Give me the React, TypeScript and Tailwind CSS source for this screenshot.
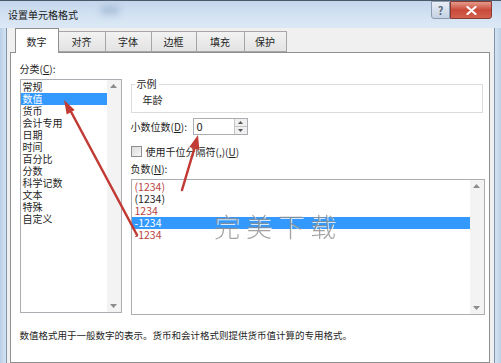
import React from "react";

const categories = [
  "常规",
  "数值",
  "货币",
  "会计专用",
  "日期",
  "时间",
  "百分比",
  "分数",
  "科学记数",
  "文本",
  "特殊",
  "自定义",
];

const negatives = [
  { text: "(1234)", red: true },
  { text: "(1234)", red: false },
  { text: "1234", red: true },
  { text: "-1234", red: false, selected: true },
  { text: "-1234", red: true },
];

const tabs = [
  { label: "数字", w: "w-[44px]" },
  { label: "对齐", w: "w-[47px]" },
  { label: "字体", w: "w-[46px]" },
  { label: "边框", w: "w-[45px]" },
  { label: "填充", w: "w-[48px]" },
  { label: "保护", w: "w-[42px]" },
];

function ScrollTrack() {
  return (
    <div className="flex w-[14px] flex-col items-center justify-between bg-[#f3f3f3] py-[4px] text-[#8c8c8c]">
      <svg width="7" height="4" viewBox="0 0 7 4">
        <path d="M0 4 L3.5 0 L7 4 Z" fill="currentColor" />
      </svg>
      <svg width="7" height="4" viewBox="0 0 7 4">
        <path d="M0 0 L3.5 4 L7 0 Z" fill="currentColor" />
      </svg>
    </div>
  );
}

export default function App() {
  return (
    <div
      className="relative flex h-[363px] w-[501px] flex-col overflow-hidden bg-[#f0f0f0] text-[10px] text-[#1e1e1e]"
      style={{ fontFamily: '"Noto Sans CJK SC", "Noto Sans", sans-serif' }}
    >
      {/* title bar */}
      <div className="relative flex h-[28px] shrink-0 items-center border-t border-[#4a5a6a] bg-gradient-to-b from-[#c3d6ec] via-[#d3e2f2] to-[#dce8f5] pl-[8px]">
        <span className="text-[10px] leading-none text-[#1a1a1a]">设置单元格格式</span>
        <div className="absolute left-[100px] top-[4px] h-[10px] w-[20px] rounded-full bg-[#aec4dc] blur-[3px]" />
        <div className="ml-auto mr-[9px] flex self-start">
          <div className="flex h-[18px] w-[19px] items-center justify-center rounded-bl-[3px] border border-[#8a9bb0] bg-gradient-to-b from-[#e8eef6] to-[#c4d2e3] text-[11px] font-bold leading-none text-[#5c6b7d]">
            ?
          </div>
          <div className="flex h-[18px] w-[42px] items-center justify-center rounded-br-[3px] border border-[#8a3a30] bg-gradient-to-b from-[#e39a8c] via-[#c9493a] to-[#d2614f]">
            <svg width="11" height="9" viewBox="0 0 11 9">
              <path d="M1.5 1 L9.5 8 M9.5 1 L1.5 8" stroke="#ffffff" strokeWidth="2.2" strokeLinecap="round" />
            </svg>
          </div>
        </div>
      </div>

      <div className="flex flex-1">
        {/* left frame */}
        <div className="w-[7px] border-r border-[#7f93aa] bg-gradient-to-r from-[#b9cfe6] to-[#d4e3f2]" />

        <div className="flex flex-1 flex-col">
          {/* tabs */}
          <div className="flex h-[24px] items-end pl-[8px]">
            {tabs.map((t, i) =>
              i === 0 ? (
                <div
                  key={t.label}
                  className={`relative z-10 -mb-px flex h-[25px] ${t.w} items-center justify-center border border-b-0 border-[#8e8f8f] bg-white`}
                >
                  {t.label}
                </div>
              ) : (
                <div
                  key={t.label}
                  className={`flex h-[21px] ${t.w} items-center justify-center border border-l-0 border-[#a6a6a6] bg-gradient-to-b from-[#f2f2f2] to-[#e3e3e3]`}
                >
                  {t.label}
                </div>
              )
            )}
          </div>

          {/* tab panel */}
          <div className="ml-[3px] mr-[4px] flex flex-1 flex-col border border-[#8e8f8f] bg-white pl-[9px] pr-[4px] pt-[10px]">
            <div className="flex">
              {/* category column */}
              <div className="flex w-[102px] flex-col">
                <div className="h-[16px] leading-[12px]">
                  分类(<span className="underline">C</span>):
                </div>
                <div className="flex h-[234px] border border-[#abadb3] bg-white">
                  <div className="flex flex-1 flex-col pt-px">
                    {categories.map((c, i) => (
                      <div
                        key={c}
                        className={`h-[12px] pl-[2px] leading-[12px] ${
                          i === 1 ? "bg-[#3399ff] text-white" : ""
                        }`}
                      >
                        {c}
                      </div>
                    ))}
                  </div>
                  <ScrollTrack />
                </div>
              </div>

              {/* right column */}
              <div className="ml-[9px] flex flex-1 flex-col pt-[16px]">
                <fieldset className="relative h-[34px] w-[352px] border border-[#dcdcdc] px-[3px]">
                  <legend className="px-[2px] leading-[10px]">示例</legend>
                  <div className="pl-[8px] pt-[5px] leading-[12px]">年龄</div>
                </fieldset>

                <div className="mt-[5px] flex h-[17px] items-center">
                  <span className="w-[62px]">
                    小数位数(<span className="underline">D</span>):
                  </span>
                  <div className="flex h-[17px] w-[55px] border border-[#abadb3] bg-white">
                    <div className="flex flex-1 items-center pl-[3px] text-[11px]">0</div>
                    <div className="flex w-[13px] flex-col">
                      <div className="flex flex-1 items-center justify-center border-b border-l border-[#c5c5c5] bg-[#f0f0f0]">
                        <svg width="5" height="3" viewBox="0 0 5 3">
                          <path d="M0 3 L2.5 0 L5 3 Z" fill="#555" />
                        </svg>
                      </div>
                      <div className="flex flex-1 items-center justify-center border-l border-[#c5c5c5] bg-[#f0f0f0]">
                        <svg width="5" height="3" viewBox="0 0 5 3">
                          <path d="M0 0 L2.5 3 L5 0 Z" fill="#555" />
                        </svg>
                      </div>
                    </div>
                  </div>
                </div>

                <div className="mt-[10px] flex h-[12px] items-center">
                  <div className="h-[11px] w-[11px] border border-[#8e8f8f] bg-gradient-to-br from-[#dcdcdc] to-[#f6f6f6]" />
                  <span className="ml-[4px]">
                    使用千位分隔符(,)(<span className="underline">U</span>)
                  </span>
                </div>

                <div className="mt-[6px] h-[12px] leading-[12px]">
                  负数(<span className="underline">N</span>):
                </div>

                <div className="mt-[4px] flex h-[136px] w-[354px] border border-[#abadb3] bg-white">
                  <div className="flex flex-1 flex-col pt-px text-[10.5px]">
                    {negatives.map((n, i) => (
                      <div
                        key={i}
                        className={`h-[12px] pl-[3px] leading-[12px] ${
                          n.selected
                            ? "bg-[#3399ff] text-white"
                            : n.red
                            ? "text-[#b94444]"
                            : "text-[#1e1e1e]"
                        }`}
                      >
                        {n.text}
                      </div>
                    ))}
                  </div>
                  <ScrollTrack />
                </div>
              </div>
            </div>

            <div className="mt-[14px] text-[9.5px] leading-[12px]">
              数值格式用于一般数字的表示。货币和会计格式则提供货币值计算的专用格式。
            </div>
          </div>
        </div>

        {/* right frame */}
        <div className="w-[8px] border-l border-[#7f93aa] bg-gradient-to-r from-[#d4e3f2] to-[#bcd1e8]" />
      </div>

      {/* watermark */}
      <div className="pointer-events-none absolute left-[214px] top-[206px] text-[26px] font-light tracking-[6px] text-[#8d8d8d] opacity-80 [text-shadow:1px_1px_0_#ffffff]">
        完美下载
      </div>

      {/* red annotation arrows */}
      <svg className="pointer-events-none absolute left-0 top-0" width="501" height="363">
        <line x1="137" y1="235" x2="69" y2="108" stroke="#c23a34" strokeWidth="2.5" strokeLinecap="round" />
        <polygon points="64,100 74.7,110.1 66.7,114.4" fill="#c23a34" />
        <line x1="182" y1="190" x2="196" y2="143" stroke="#c23a34" strokeWidth="2.5" strokeLinecap="round" />
        <polygon points="198,135 199.4,150 189.3,147" fill="#c23a34" />
      </svg>
    </div>
  );
}
